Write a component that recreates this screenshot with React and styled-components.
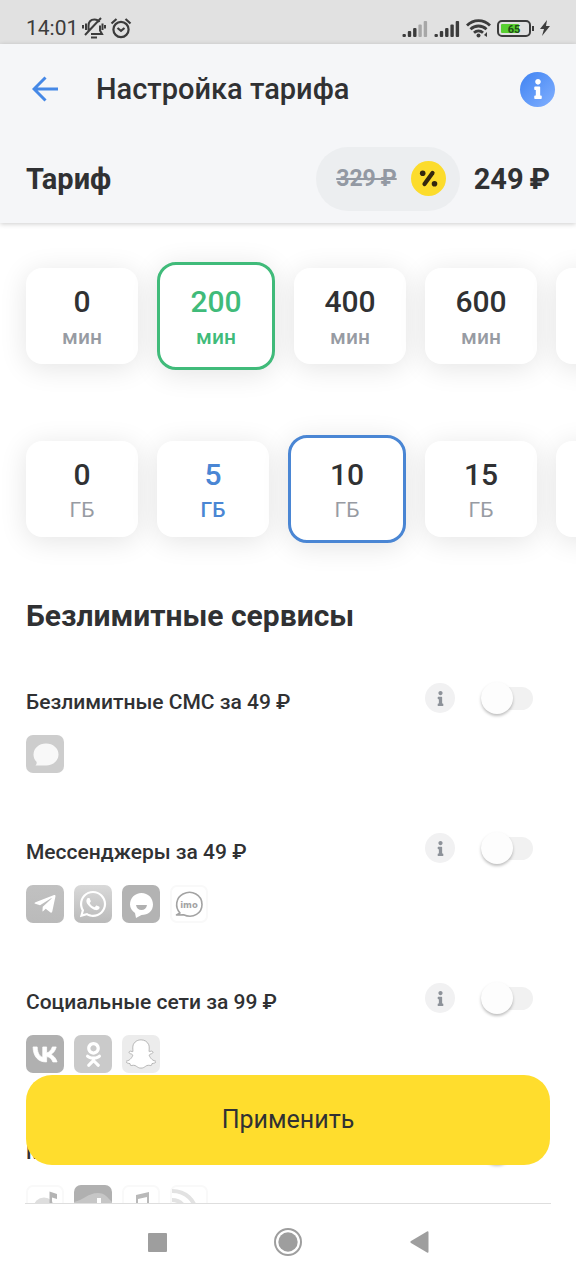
import React, { useState } from 'react';
import styled, { createGlobalStyle, css } from 'styled-components';
import { FaInfo, FaOdnoklassniki, FaSnapchatGhost, FaTelegramPlane, FaWhatsapp } from 'react-icons/fa';

const GlobalStyle = createGlobalStyle`
  *, *::before, *::after { box-sizing: border-box; }
  body { margin: 0; background: #fff; color: #303133; font-family: Roboto, "Liberation Sans", sans-serif; }
  button { border: 0; padding: 0; background: none; color: inherit; font: inherit; cursor: pointer; }
  svg { display: block; flex: none; }
`;

const Screen = styled.div`
  display: flex;
  flex-direction: column;
  height: 100vh;
  overflow: hidden;
`;

const StatusBar = styled.div`
  display: flex;
  flex: none;
  align-items: center;
  justify-content: space-between;
  height: 44px;
  padding: 12px 26px 0 26px;
  background: #e1e1e1;
  color: #3c3c3c;
`;

const StatusGroup = styled.div`
  display: flex;
  align-items: center;
  gap: ${(p) => p.$gap}px;
`;

const Clock = styled.time`
  font-size: 21px;
  line-height: 24px;
`;

const Header = styled.header`
  position: relative;
  z-index: 2;
  flex: none;
  padding: 0 26px;
  background: #f5f6f8;
  box-shadow: 0 1px 5px rgba(0, 0, 0, 0.2);
`;

const TitleBar = styled.div`
  display: flex;
  align-items: center;
  height: 90px;
  margin-right: -5px;
`;

const BackButton = styled.button`
  width: 70px;
  height: 44px;
  padding-left: 6px;
  color: #4588e6;
`;

const Title = styled.h1`
  flex: 1;
  margin: 0;
  font-size: 29px;
  font-weight: 500;
  line-height: 36px;
`;

const InfoButton = styled.button`
  display: grid;
  flex: none;
  place-items: center;
  width: ${(p) => (p.$primary ? 35 : 30)}px;
  height: ${(p) => (p.$primary ? 35 : 30)}px;
  border-radius: 50%;
  background: ${(p) => (p.$primary ? 'linear-gradient(135deg, #3f83f2, #82b0ff)' : '#f1f1f2')};
  color: ${(p) => (p.$primary ? '#fff' : '#8d9299')};
`;

const PriceBar = styled.div`
  display: flex;
  align-items: center;
  height: 89px;
  gap: 14px;
`;

const PriceTitle = styled.h2`
  flex: 1;
  margin: 0;
  font-size: 29px;
  font-weight: 700;
  line-height: 36px;
`;

const Discount = styled.div`
  display: flex;
  align-items: center;
  gap: 14px;
  height: 64px;
  padding: 0 14px 0 20px;
  border-radius: 32px;
  background: #eceef0;
`;

const OldPrice = styled.s`
  color: #9399a3;
  font-size: 23px;
  font-weight: 700;
  line-height: 30px;
`;

const Price = styled.strong`
  font-size: 29px;
  font-weight: 700;
  line-height: 36px;
`;

const Body = styled.div`
  position: relative;
  flex: 1;
  min-height: 0;
`;

const Content = styled.main`
  height: 100%;
  padding-top: 7px;
  overflow: hidden auto;
  scrollbar-width: none;
`;

const Picker = styled.fieldset`
  display: flex;
  align-items: center;
  gap: 19px;
  min-width: 0;
  margin: 0;
  padding: 32px 26px 33px;
  border: 0;
  overflow-x: auto;
  scrollbar-width: none;
`;

const Option = styled.label`
  display: flex;
  flex: none;
  flex-direction: column;
  align-items: center;
  justify-content: center;
  width: 112px;
  height: 96px;
  padding-top: 6px;
  border-radius: 16px;
  background: #fff;
  box-shadow: 0 4px 28px rgba(0, 0, 0, 0.11);
  color: ${(p) => p.$color || '#303133'};
  cursor: pointer;
  ${(p) => p.$selected && css`
    width: 118px;
    height: 108px;
    border: 3px solid ${p.$accent};
    border-radius: 19px;
  `}
`;

const HiddenRadio = styled.input`
  position: absolute;
  width: 1px;
  height: 1px;
  margin: 0;
  opacity: 0;
`;

const Amount = styled.span`
  font-size: 30px;
  font-weight: 500;
  line-height: 36px;
`;

const Unit = styled.span`
  color: ${(p) => p.$color || '#979ba3'};
  font-size: 21px;
  font-weight: ${(p) => (p.$light ? 400 : 500)};
  line-height: 34px;
`;

const SectionTitle = styled.h2`
  margin: 22px 26px 46px;
  font-size: 30px;
  font-weight: 700;
  line-height: 36px;
`;

const Service = styled.section`
  height: 150px;
  padding: 0 43px 0 26px;
`;

const ServiceHead = styled.div`
  display: flex;
  align-items: center;
  height: 36px;
`;

const ServiceName = styled.label`
  flex: 1;
  padding-top: 7px;
  font-size: 21px;
  font-weight: 500;
  line-height: 24px;
`;

const Switch = styled.input`
  appearance: none;
  display: flex;
  align-items: center;
  width: 52px;
  height: 23px;
  margin: 0 0 0 26px;
  border-radius: 12px;
  background: #f1f1f1;
  cursor: pointer;
  &::before {
    content: "";
    width: 32px;
    height: 32px;
    border-radius: 50%;
    background: #fdfdfd;
    box-shadow: 0 2px 3px rgba(0, 0, 0, 0.25);
  }
  &:checked { justify-content: flex-end; background: #ffdd2d; }
`;

const Apps = styled.div`
  display: flex;
  gap: 10px;
  margin-top: 19px;
`;

const AppTile = styled.span`
  display: grid;
  place-items: center;
  width: 38px;
  height: 38px;
  border-radius: 7px;
  background: ${(p) => p.$bg};
  box-shadow: ${(p) => (p.$outlined ? 'inset 0 0 0 2px #f9f9f9' : 'none')};
  color: #fff;
  overflow: hidden;
`;

const ApplyButton = styled.button`
  position: absolute;
  right: 26px;
  bottom: 38px;
  left: 26px;
  height: 90px;
  border-radius: 26px;
  background: #ffdd2d;
  font-size: 25px;
  line-height: 32px;
`;

const SystemNav = styled.nav`
  display: flex;
  flex: none;
  align-items: center;
  justify-content: center;
  gap: 91px;
  height: 77px;
  margin: 0 25px;
  border-top: 1px solid #dedede;
  color: #9e9e9e;
`;

const NavButton = styled.button`
  display: grid;
  place-items: center;
  width: 40px;
  height: 48px;
`;

function MutedBell() {
  return (
    <svg width="24" height="22" viewBox="0 0 24 22" fill="none" stroke="currentColor" strokeWidth="2">
      <path d="M6.500 14V9c0-4 2-6.500 6-6.500 2 0 4 1 5 2.500M18 8.500v5l2 3.500H9M3 18 19 1M1 8v3.500M4 6.500v6.500M20.500 6.500v6.500M23 8v3.500" />
      <path d="M9 20.500h6" />
    </svg>
  );
}

function AlarmClock() {
  return (
    <svg width="22" height="21" viewBox="0 0 22 21" fill="none" stroke="currentColor" strokeWidth="2.2">
      <circle cx="11" cy="11.500" r="7.600" />
      <path d="m1.500 5.500 5-4.500M20.500 5.500l-5-4.500M7.500 10l3.500 2.800 3.500-2.800" />
    </svg>
  );
}

function Signal({ strength }) {
  return (
    <svg width="26" height="17" viewBox="0 0 26 17" fill="currentColor">
      {[3, 6, 9, 12.5, 16].map((h, i) => (
        <rect key={h} x={0.5 + i * 5.3} y={17 - h} width="3.4" height={h} rx="1" opacity={i < strength ? 1 : 0.35} />
      ))}
    </svg>
  );
}

function Wifi() {
  return (
    <svg width="25" height="19" viewBox="0 0 25 19" fill="none" stroke="currentColor" strokeWidth="2.8">
      <path d="M1 6.500c6.500-6.600 16.500-6.600 23 0M4.500 10.300c4.500-4.400 11.500-4.400 16 0M8 13.800c2.600-2.400 6.400-2.400 9 0" />
      <circle cx="12.500" cy="16.500" r="2" fill="currentColor" stroke="none" />
      <path d="m21 13-3 3 3 2z" fill="currentColor" stroke="none" />
    </svg>
  );
}

function Battery() {
  return (
    <svg width="37" height="17" viewBox="0 0 37 17">
      <rect x="1" y="1" width="32" height="15" rx="4" fill="#e1e1e1" stroke="#3c3c3c" strokeWidth="2" />
      <path d="M35 6h2v5h-2z" fill="#3c3c3c" />
      <rect x="4" y="4" width="18" height="9" rx="1" fill="#58cf32" />
      <text x="17" y="12.500" textAnchor="middle" fontSize="11" fontWeight="700" fill="#214c17">65</text>
    </svg>
  );
}

function Bolt() {
  return (
    <svg width="10" height="16" viewBox="0 0 10 16" fill="currentColor">
      <path d="M7 0 0 9h4l-2 7 8-10H6z" />
    </svg>
  );
}

function BackArrow() {
  return (
    <svg width="27" height="26" viewBox="0 0 27 26" fill="none" stroke="currentColor" strokeWidth="3">
      <path d="M26 13H2M13.500 1.500 2 13l11.500 11.500" />
    </svg>
  );
}

function PercentBadge() {
  return (
    <svg width="35" height="35" viewBox="0 0 35 35">
      <circle cx="17.500" cy="17.500" r="17.500" fill="#fcdc2c" />
      <path d="m13.500 23 8-11" stroke="#33270f" strokeWidth="4.200" strokeLinecap="round" />
      <circle cx="11.700" cy="12.300" r="2.800" fill="#33270f" />
      <circle cx="23.500" cy="22.800" r="2.800" fill="#33270f" />
    </svg>
  );
}

function SmsIcon() {
  return (
    <svg width="38" height="38" viewBox="0 0 38 38">
      <path d="M20 8.500c7 0 12.500 4.700 12.500 11S27 30.500 20 30.500H9.500c1.300-1.200 1.500-2.500.8-4C8.300 24.500 7.500 22 7.500 19.500c0-6.300 5.500-11 12.500-11" fill="#f8f8f8" />
    </svg>
  );
}

function TamTamIcon() {
  return (
    <svg width="38" height="38" viewBox="0 0 38 38">
      <path d="M19.500 8C26 8 31 13 31 19.500S26 30 19.500 30L14 33l-1-5c-3-2-5-5-5-8.500C8 13 13 8 19.500 8" fill="#fff" />
      <path d="M14 20h11c-.5 3.500-2.700 5-5.500 5s-5-1.500-5.500-5" fill="#b0b0b0" />
    </svg>
  );
}

function ImoIcon() {
  return (
    <svg width="38" height="38" viewBox="0 0 38 38">
      <path d="M10 28C4.500 22 6 12.500 13 9c9-4.500 19 1 19 10.500 0 8.500-8.500 14.500-18.500 10.300L6.500 30z" fill="none" stroke="#a3a3a3" strokeWidth="1.600" strokeLinejoin="round" />
      <text x="19" y="22.500" textAnchor="middle" fontFamily="DejaVu Sans, sans-serif" fontSize="8.500" fontWeight="700" fill="#a3a3a3">imo</text>
    </svg>
  );
}

function VkIcon() {
  return (
    <svg width="36" height="36" viewBox="0 0 24 24" fill="#fff" stroke="#fff" strokeWidth=".5">
      <path d="M12.770 17.290c-5.470 0-8.590-3.750-8.720-9.990h2.740c.09 4.580 2.110 6.520 3.710 6.920V7.300h2.580v3.950c1.580-.17 3.240-1.970 3.800-3.950h2.580c-.43 2.440-2.230 4.240-3.510 4.980 1.280.6 3.330 2.170 4.110 5.010h-2.840c-.61-1.900-2.130-3.370-4.140-3.570v3.570z" />
    </svg>
  );
}

function DiscNoteIcon() {
  return (
    <svg width="38" height="38" viewBox="0 0 38 38">
      <circle cx="18" cy="23" r="10.500" fill="#dedede" />
      <path d="M23.500 6.500 31 9v5l-5-1.500V23h-2.500z" fill="#b4b4b4" />
    </svg>
  );
}

function WaveIcon() {
  return (
    <svg width="38" height="38" viewBox="0 0 38 38">
      <path d="M0 17C10 15 14 8 24 8c7 0 10 5 14 9v21H0z" fill="#c6c6c6" />
      <path d="M23 13h4v17h-4z" fill="#fff" />
    </svg>
  );
}

function NotesIcon() {
  return (
    <svg width="38" height="38" viewBox="0 0 38 38" fill="#b9b9b9">
      <path d="M14 10 27 7v16h-2V12l-9 2v12h-2z" />
      <circle cx="12" cy="26" r="3" />
      <circle cx="24" cy="23" r="3" />
    </svg>
  );
}

function RadioIcon() {
  return (
    <svg width="38" height="38" viewBox="0 0 38 38" fill="none" stroke="#e2e2e2" strokeWidth="4">
      <path d="M2 6c14 0 23 9 25 23M2 15c8 0 13 5 15 15" />
    </svg>
  );
}

const GREEN = '#40bb7a';
const BLUE = '#4a86d4';

const MINUTES = [0, 200, 400, 600, 800];
const GIGABYTES = [0, 5, 10, 15, 20];

const SERVICES = [
  {
    name: 'Безлимитные СМС за 49 ₽',
    apps: [{ id: 'sms', bg: '#cdcdcd', icon: <SmsIcon /> }],
  },
  {
    name: 'Мессенджеры за 49 ₽',
    apps: [
      { id: 'telegram', bg: 'linear-gradient(#c1c1c1, #bababa)', icon: <FaTelegramPlane size={24} /> },
      { id: 'whatsapp', bg: 'linear-gradient(#d9d9d9, #bababa)', icon: <FaWhatsapp size={30} /> },
      { id: 'tamtam', bg: '#b3b3b3', icon: <TamTamIcon /> },
      { id: 'imo', bg: '#fff', outlined: true, icon: <ImoIcon /> },
    ],
  },
  {
    name: 'Социальные сети за 99 ₽',
    apps: [
      { id: 'vk', bg: '#b0b0b0', icon: <VkIcon /> },
      { id: 'ok', bg: '#cacaca', icon: <FaOdnoklassniki size={25} /> },
      { id: 'snapchat', bg: '#ececec', icon: <FaSnapchatGhost size={30} stroke="#a9a9a9" strokeWidth={14} /> },
    ],
  },
  {
    name: 'Музыка за 49 ₽',
    apps: [
      { id: 'disc', bg: '#fff', outlined: true, icon: <DiscNoteIcon /> },
      { id: 'wave', bg: '#b0b0b0', icon: <WaveIcon /> },
      { id: 'notes', bg: '#fff', outlined: true, icon: <NotesIcon /> },
      { id: 'radio', bg: '#fff', outlined: true, icon: <RadioIcon /> },
    ],
  },
];

function PackagePicker({ name, label, unit, values, value, onChange, accent, current, tinted, light }) {
  return (
    <Picker aria-label={label}>
      {values.map((v) => {
        const color = v === current || (tinted && v === value) ? accent : undefined;
        return (
          <Option key={v} $selected={v === value} $accent={accent} $color={color}>
            <HiddenRadio type="radio" name={name} checked={v === value} onChange={() => onChange(v)} />
            <Amount>{v}</Amount>
            <Unit $color={color} $light={light && !color}>{unit}</Unit>
          </Option>
        );
      })}
    </Picker>
  );
}

function ServiceRow({ id, name, apps }) {
  return (
    <Service>
      <ServiceHead>
        <ServiceName htmlFor={id}>{name}</ServiceName>
        <InfoButton type="button" aria-label="Подробнее"><FaInfo size={15} /></InfoButton>
        <Switch type="checkbox" role="switch" id={id} />
      </ServiceHead>
      <Apps>
        {apps.map((app) => (
          <AppTile key={app.id} $bg={app.bg} $outlined={app.outlined}>{app.icon}</AppTile>
        ))}
      </Apps>
    </Service>
  );
}

export default function App() {
  const [minutes, setMinutes] = useState(200);
  const [gigabytes, setGigabytes] = useState(10);

  return (
    <Screen>
      <GlobalStyle />
      <StatusBar>
        <StatusGroup $gap={4}>
          <Clock>14:01</Clock>
          <MutedBell />
          <AlarmClock />
        </StatusGroup>
        <StatusGroup $gap={6}>
          <Signal strength={3} />
          <Signal strength={5} />
          <Wifi />
          <Battery />
          <Bolt />
        </StatusGroup>
      </StatusBar>

      <Header>
        <TitleBar>
          <BackButton type="button" aria-label="Назад"><BackArrow /></BackButton>
          <Title>Настройка тарифа</Title>
          <InfoButton type="button" $primary aria-label="О тарифе"><FaInfo size={20} /></InfoButton>
        </TitleBar>
        <PriceBar>
          <PriceTitle>Тариф</PriceTitle>
          <Discount>
            <OldPrice>329&thinsp;₽</OldPrice>
            <PercentBadge />
          </Discount>
          <Price>249&thinsp;₽</Price>
        </PriceBar>
      </Header>

      <Body>
        <Content>
          <PackagePicker name="minutes" label="Минуты" unit="мин" values={MINUTES} value={minutes} onChange={setMinutes} accent={GREEN} tinted />
          <PackagePicker name="gigabytes" label="Интернет" unit="ГБ" values={GIGABYTES} value={gigabytes} onChange={setGigabytes} accent={BLUE} current={5} light />
          <SectionTitle>Безлимитные сервисы</SectionTitle>
          {SERVICES.map((service, i) => (
            <ServiceRow key={service.name} id={`service-${i}`} {...service} />
          ))}
        </Content>
        <ApplyButton type="button">Применить</ApplyButton>
      </Body>

      <SystemNav>
        <NavButton type="button" aria-label="Недавние">
          <svg width="19" height="19" viewBox="0 0 19 19" fill="currentColor"><rect width="19" height="19" rx="1" /></svg>
        </NavButton>
        <NavButton type="button" aria-label="Домой">
          <svg width="28" height="28" viewBox="0 0 28 28" fill="currentColor">
            <circle cx="14" cy="14" r="13" fill="none" stroke="currentColor" strokeWidth="2" />
            <circle cx="14" cy="14" r="9.700" />
          </svg>
        </NavButton>
        <NavButton type="button" aria-label="Назад">
          <svg width="19" height="22" viewBox="0 0 19 22" fill="currentColor"><path d="M17 .5q1.500-.8 1.500 1v19q0 1.800-1.500 1L1 12q-1.300-1 0-2z" /></svg>
        </NavButton>
      </SystemNav>
    </Screen>
  );
}
